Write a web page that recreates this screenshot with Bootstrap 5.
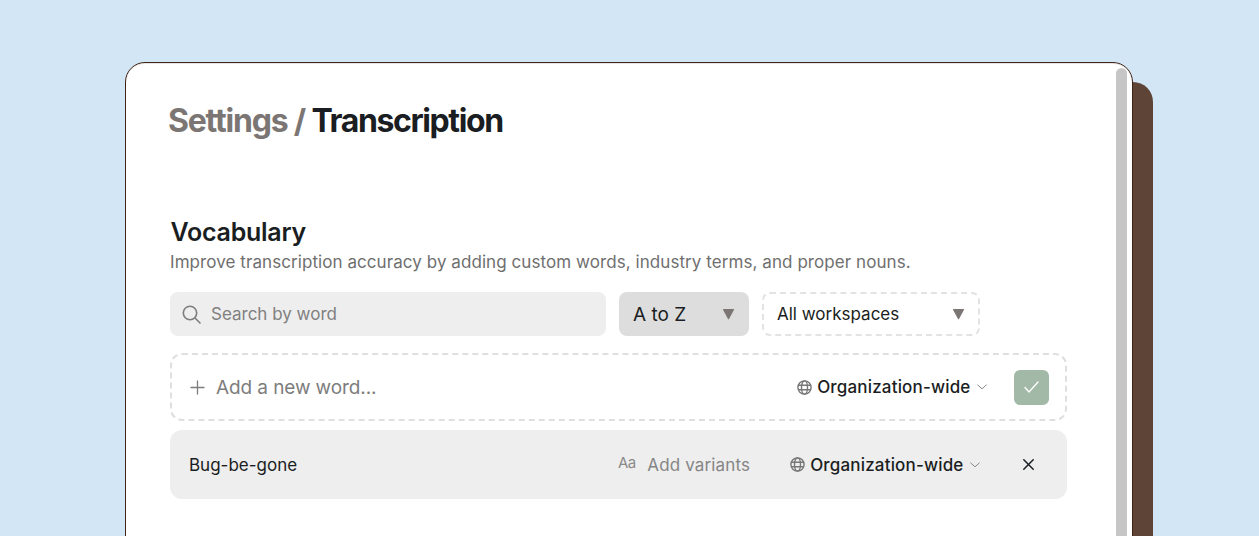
<!DOCTYPE html>
<html lang="en">
<head>
<meta charset="utf-8">
<title>Settings / Transcription</title>
<link href="https://cdn.jsdelivr.net/npm/bootstrap@5.3.0/dist/css/bootstrap.min.css" rel="stylesheet">
<style>
html,body{height:536px;overflow:hidden;}
body{background:#d3e6f5;font-family:Inter,"Liberation Sans",sans-serif;color:#1a1d21;}
.stage{padding:62px 0 0 125px;}
.win{width:1008px;height:700px;background:#fff;border:1px solid #3f2415;border-radius:20px;box-shadow:inset 0 1px 0 #e6e6e6,20px 20px 0 #5e4337;overflow:hidden;}
.pane{width:990px;padding:0 0 0 44px;}
.crumbs{font-size:32px;font-weight:700;letter-spacing:-1.4px;line-height:40px;margin:38px 0 0 -2px;color:#1a1d21;}
.crumbs span{color:#7b7673;letter-spacing:-1.2px;}
.sect{font-size:25px;font-weight:600;letter-spacing:-.25px;line-height:32px;margin:75px 0 0 .5px;}
.sub{font-size:17px;color:#6f6f6f;line-height:22px;margin:3px 0 0;letter-spacing:.07px;}
.tools{margin-top:19px;height:44px;}
.find{width:436px;height:44px;background:#eeeeee;border-radius:8px;padding-left:12px;color:#7f7f7f;font-size:17px;}
.find-in{border:0;outline:0;background:transparent;font-size:17px;color:#1a1d21;padding:2px 0 0;width:300px;margin-left:10px;}
.find-in::placeholder{color:#808080;opacity:1;}
.pick{height:44px;border-radius:8px;font-size:17px;color:#1a1d21;}
.pick-sort{width:130px;background:#dddddd;padding:0 14px;font-size:19px;margin-left:13px;}
.pick-sort span{padding-top:2px;}
.pick-ws{width:218px;border:2px dashed #e3e3e3;padding:0 13px;margin-left:13px;}
.pick-ws span{padding-top:2px;}
.tri{width:13px;height:12px;flex:none;}
.addrow{width:897px;height:68px;margin-top:17px;border:2px dashed #dfdfdf;border-radius:12px;padding:0 16px 0 18px;}
.newtxt{font-size:19px;color:#7d7d7d;margin-left:11px;letter-spacing:-.1px;padding-top:2px;}
.scope{font-size:17px;font-weight:550;color:#1a1d21;letter-spacing:.17px;}
.scope span{padding-top:2px;}
.scope-globe{margin-right:5.5px;flex:none;}
.scope-chev{margin-left:6.5px;flex:none;}
.okbtn{width:35px;height:35px;background:#a2b9a8;border-radius:6px;margin-left:27px;border:0;padding:0;}
.wordrow{width:897px;height:69px;margin-top:9px;background:#eeeeee;border-radius:12px;padding:0 33px 0 19px;font-size:17px;}
.wordrow span{padding-top:2px;}
.varbtn{color:#858585;font-size:17px;margin-right:39.5px;letter-spacing:.15px;}
.wordrow .aa-mark{font-size:15px;letter-spacing:-.5px;margin-right:11.5px;color:#8a8a8a;padding:0 0 3px;}
.closebtn{margin-left:43px;border:0;background:none;padding:0;line-height:0;}
.thumbtrack{width:12px;margin:5px 0 0 0;}
.thumb{width:11px;height:700px;background:#c6c6c6;border-radius:6px 6px 0 0;}
</style>
</head>
<body>
<div class="stage">
<div class="win d-flex">
  <main class="pane flex-shrink-0">
    <h1 class="crumbs"><span>Settings / </span>Transcription</h1>
    <h2 class="sect">Vocabulary</h2>
    <p class="sub">Improve transcription accuracy by adding custom words, industry terms, and proper nouns.</p>

    <div class="tools d-flex align-items-center">
      <div class="find d-flex align-items-center">
        <svg width="19" height="19" viewBox="0 0 19 19" fill="none" stroke="#7d7d7d" stroke-width="1.6" stroke-linecap="round"><circle cx="8" cy="8" r="6.7"/><path d="M13 13l5 5"/></svg>
        <input class="find-in" type="text" placeholder="Search by word">
      </div>
      <div class="pick pick-sort d-flex align-items-center justify-content-between">
        <span>A to Z</span>
        <svg class="tri" viewBox="0 0 13 12"><path d="M1 1.500a.6.6 0 0 1 .5-.5h10a.6.6 0 0 1 .5.8L7 11a.6.6 0 0 1-1 0L1 1.800z" fill="#7b7673"/></svg>
      </div>
      <div class="pick pick-ws d-flex align-items-center justify-content-between">
        <span>All workspaces</span>
        <svg class="tri" viewBox="0 0 13 12"><path d="M1 1.500a.6.6 0 0 1 .5-.5h10a.6.6 0 0 1 .5.8L7 11a.6.6 0 0 1-1 0L1 1.800z" fill="#7b7673"/></svg>
      </div>
    </div>

    <div class="addrow d-flex align-items-center">
      <svg width="15" height="15" viewBox="0 0 15 15" stroke="#7d7d7d" stroke-width="1.3" stroke-linecap="round"><path d="M7.500 1v13M1 7.500h13"/></svg>
      <span class="newtxt">Add a new word...</span>
      <div class="scope d-flex align-items-center ms-auto">
        <svg class="scope-globe" width="15" height="15" viewBox="0 0 15 15" fill="none" stroke="#777" stroke-width="1.4"><circle cx="7.500" cy="7.500" r="6.600"/><ellipse cx="7.500" cy="7.500" rx="3" ry="6.600"/><path d="M1.200 5.300h12.600M1.200 9.700h12.600"/></svg>
        <span>Organization-wide</span>
        <svg class="scope-chev" width="10" height="6" viewBox="0 0 10 6" fill="none" stroke="#8a8a8a" stroke-width="1" stroke-linecap="round"><path d="M.7 1l4.300 3.800L9.300 1"/></svg>
      </div>
      <button class="okbtn d-flex align-items-center justify-content-center" type="button" aria-label="Confirm">
        <svg width="15" height="12" viewBox="0 0 15 12" fill="none" stroke="#fff" stroke-width="1.3" stroke-linecap="round" stroke-linejoin="round"><path d="M1 6.500l4 4.500L14 1"/></svg>
      </button>
    </div>

    <div class="wordrow d-flex align-items-center">
      <span>Bug-be-gone</span>
      <div class="varbtn d-flex align-items-center ms-auto">
        <span class="aa-mark">Aa</span>
        <span>Add variants</span>
      </div>
      <div class="scope d-flex align-items-center">
        <svg class="scope-globe" width="15" height="15" viewBox="0 0 15 15" fill="none" stroke="#777" stroke-width="1.4"><circle cx="7.500" cy="7.500" r="6.600"/><ellipse cx="7.500" cy="7.500" rx="3" ry="6.600"/><path d="M1.200 5.300h12.600M1.200 9.700h12.600"/></svg>
        <span>Organization-wide</span>
        <svg class="scope-chev" width="10" height="6" viewBox="0 0 10 6" fill="none" stroke="#8a8a8a" stroke-width="1" stroke-linecap="round"><path d="M.7 1l4.300 3.800L9.300 1"/></svg>
      </div>
      <button class="closebtn" type="button" aria-label="Remove">
        <svg width="11" height="11" viewBox="0 0 11 11" stroke="#1a1d21" stroke-width="1.500" stroke-linecap="round"><path d="M.8.8l9.400 9.400M10.200.8L.8 10.200"/></svg>
      </button>
    </div>
  </main>
  <div class="thumbtrack"><div class="thumb"></div></div>
</div>
</div>
<script src="https://cdn.jsdelivr.net/npm/bootstrap@5.3.0/dist/js/bootstrap.bundle.min.js"></script>
</body>
</html>
